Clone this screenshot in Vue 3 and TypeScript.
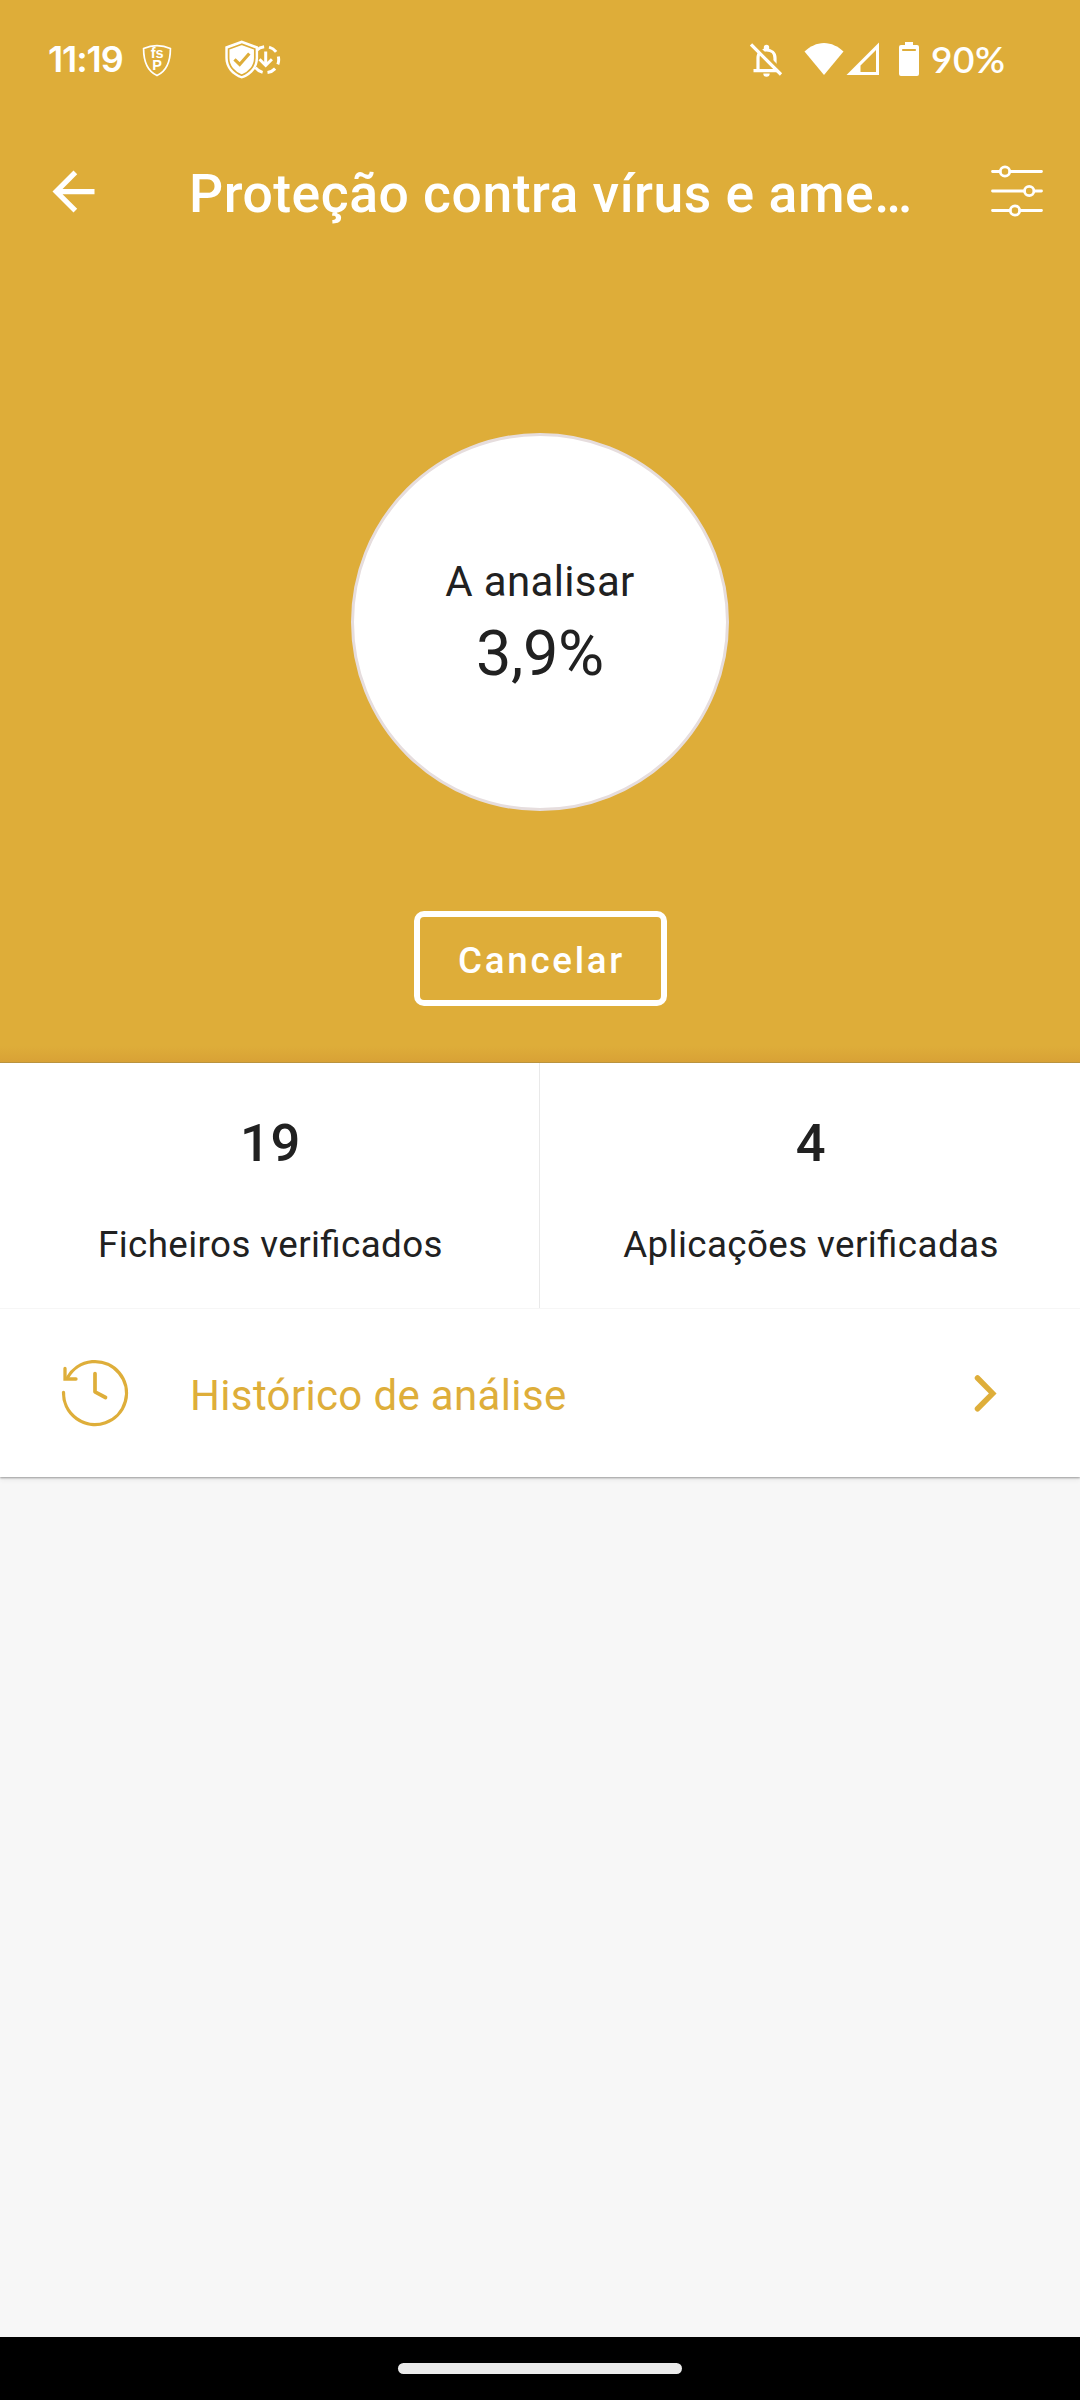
<script setup lang="ts">
interface Stat {
  value: string
  label: string
}

const title = 'Proteção contra vírus e ame…'
const progress = '3,9%'
const stats: Stat[] = [
  { value: '19', label: 'Ficheiros verificados' },
  { value: '4', label: 'Aplicações verificadas' },
]
</script>

<template>
  <div class="screen">
    <section class="hero">
      <div class="status">
        <span class="time">11:19</span>
        <svg class="fsp" width="32" height="36" viewBox="0 0 32 36">
          <path d="M16 2.600C11.600 2.600 6.500 3.800 2.600 5.600C2.600 17.500 5.800 28 16 32.600C26.200 28 29.400 17.500 29.400 5.600C25.500 3.800 20.400 2.600 16 2.600Z" fill="none" stroke="#fff" stroke-width="1.700" />
          <text x="16.200" y="15.400" text-anchor="middle" class="fsp-text">fs</text>
          <text x="16.200" y="27.200" text-anchor="middle" class="fsp-text">P</text>
        </svg>
        <svg class="guard" width="64" height="44" viewBox="0 0 64 44">
          <circle cx="45.700" cy="21.700" r="13" fill="none" stroke="#fff" stroke-width="3" stroke-dasharray="8.600 5.014" stroke-dashoffset="3.800" />
          <path d="M45.700 13.500V27M39.500 21.300L45.700 27.500L51.900 21.300" fill="none" stroke="#fff" stroke-width="3" />
          <path d="M21.700 2.500L5.300 8.500V20C5.300 29.500 12 37.500 21.700 40.500C31.400 37.500 38.100 29.500 38.100 20V8.500Z" fill="#fff" />
          <path d="M21.700 6.200L8.600 11V20C8.600 28 14 34.500 21.700 37.200C29.400 34.500 34.800 28 34.800 20V11Z" fill="none" stroke="#dead39" stroke-width="1.700" />
          <path d="M14.500 21.300L19.700 26.500L29.300 15.500" fill="none" stroke="#dead39" stroke-width="3.200" />
        </svg>
        <span class="spring"></span>
        <svg class="bell" width="34" height="36" viewBox="0 0 34 36">
          <g fill="none" stroke="#fff" stroke-width="3.200">
            <path d="M8 27.500V16C8 11 11.500 8 16.500 8C21.500 8 25 11 25 16V27.500M3.500 28.700H29" />
          </g>
          <path d="M13.800 8V5.500A2.700 2.700 0 0 1 19.200 5.500V8ZM13.300 31.500H19.700A3.200 3.200 0 0 1 13.300 31.500Z" fill="#fff" />
          <path d="M3.500 1L33 30.500" stroke="#dead39" stroke-width="3.500" />
          <path d="M1 2.500L31 32.500" stroke="#fff" stroke-width="3.200" />
        </svg>
        <svg class="wifi" width="40" height="34" viewBox="0 0 40 34">
          <path d="M20 33L.5 9.500C6 4.500 12.500 1 20 1S34 4.500 39.500 9.500Z" fill="#fff" />
        </svg>
        <svg class="signal" width="34" height="34" viewBox="0 0 34 34">
          <path d="M33 .5V33H.5ZM30 8L14.500 23.500V30H30Z" fill="#fff" fill-rule="evenodd" />
        </svg>
        <svg class="battery" width="20" height="34" viewBox="0 0 20 34">
          <path d="M6 0H14V3H18Q20 3 20 5V32Q20 34 18 34H2Q0 34 0 32V5Q0 3 2 3H6ZM3.200 7V9H16.800V7Z" fill="#fff" fill-rule="evenodd" />
        </svg>
        <span class="percent">90%</span>
      </div>

      <header class="bar">
        <svg width="63" height="63" viewBox="0 0 24 24">
          <path d="M20 11H7.830l5.590-5.590L12 4l-8 8 8 8 1.410-1.410L7.830 13H20v-2z" fill="#fff" />
        </svg>
        <h1 class="title">{{ title }}</h1>
        <svg class="sliders" width="54" height="54" viewBox="0 0 54 54" fill="none" stroke="#fff" stroke-width="2.800" stroke-linecap="round">
          <path d="M2.500 7.500H10M20 7.500H51.500M2.500 27H34.200M44.200 27H51.500M2.500 46.500H20M30 46.500H51.500" />
          <circle cx="15" cy="7.500" r="4.700" />
          <circle cx="39.200" cy="27" r="4.700" />
          <circle cx="25" cy="46.500" r="4.700" />
        </svg>
      </header>

      <div class="disc">
        <span class="state">A analisar</span>
        <span class="progress">{{ progress }}</span>
      </div>
      <button class="cancel" type="button">Cancelar</button>
    </section>

    <section class="card">
      <div class="stats">
        <div v-for="stat in stats" :key="stat.label" class="stat">
          <span class="value">{{ stat.value }}</span>
          <span class="label">{{ stat.label }}</span>
        </div>
      </div>
      <div class="history">
        <svg width="72" height="72" viewBox="0 0 72 72" fill="none" stroke="#deae3a" stroke-width="3.300" stroke-linecap="round" stroke-linejoin="round">
          <path d="M4.500 35.500A31.500 31.500 0 1 0 8.600 20.500" />
          <path d="M6 11.500V22H17" stroke-linejoin="miter" />
          <path d="M36 16.500V34.800L46.500 40.500" stroke-width="3.700" />
        </svg>
        <span class="history-text">Histórico de análise</span>
        <svg class="chevron" width="28" height="42" viewBox="0 0 28 42" fill="none" stroke="#deae3a" stroke-width="5.500" stroke-linecap="round" stroke-linejoin="miter">
          <path d="M5.500 6L20.700 21.400L5.500 36.800" />
        </svg>
      </div>
    </section>

    <div class="rest"></div>
    <nav class="gesture"><span class="pill"></span></nav>
  </div>
</template>

<style>
body {
  margin: 0;
}
</style>

<style scoped>
.screen {
  width: 1080px;
  height: 2400px;
  display: flex;
  flex-direction: column;
  overflow: hidden;
  background: #f7f7f7;
  color: #212121;
  font-family: Roboto, sans-serif;
}
svg {
  display: block;
  flex: none;
}
.hero {
  box-sizing: border-box;
  height: 1063px;
  display: flex;
  flex-direction: column;
  align-items: center;
  background: linear-gradient(to bottom, transparent 1046px, rgba(190, 110, 40, 0.18) 1062px, rgba(130, 110, 70, 0.4) 1062px) #dead39;
}
.status {
  box-sizing: border-box;
  width: 100%;
  height: 118px;
  padding: 0 75px 0 48px;
  display: flex;
  align-items: center;
  color: #fff;
  white-space: nowrap;
}
.time {
  width: 93px;
  font: 600 36px/44px Inter, sans-serif;
  letter-spacing: -1.100px;
}
.fsp {
  margin-top: 3px;
}
.fsp-text {
  font: 700 14.500px "Liberation Sans", sans-serif;
  fill: #fff;
}
.guard {
  margin: 2px 0 0 47px;
}
.spring {
  flex: 1;
}
.bell {
  margin: 1px 20px 0 0;
}
.wifi {
  margin-right: 2px;
}
.signal {
  margin-right: 19px;
}
.battery {
  margin-right: 12px;
}
.percent {
  width: 74px;
  font: 600 37px/44px Lato, sans-serif;
  letter-spacing: 0.500px;
}
.bar {
  box-sizing: border-box;
  width: 100%;
  height: 147px;
  padding: 0 36px 0 42px;
  display: flex;
  align-items: center;
  color: #fff;
}
.title {
  flex: 1;
  margin: 0 0 0 84px;
  padding-top: 4px;
  font-size: 53.500px;
  font-weight: 500;
  line-height: 64px;
  letter-spacing: 0.500px;
  white-space: nowrap;
}
.sliders {
  margin-bottom: 1px;
}
.disc {
  box-sizing: border-box;
  width: 378px;
  height: 378px;
  margin-top: 168px;
  padding-top: 3px;
  border: 3px solid #e6dddd;
  border-radius: 50%;
  background: #fff;
  display: flex;
  flex-direction: column;
  align-items: center;
  justify-content: center;
  gap: 10px;
}
.state {
  font-size: 42px;
  line-height: 50px;
  letter-spacing: 0.350px;
}
.progress {
  font-size: 63px;
  line-height: 74px;
  letter-spacing: -0.400px;
}
.cancel {
  box-sizing: border-box;
  width: 253px;
  height: 95px;
  margin-top: 100px;
  padding: 4px 0 0 3px;
  border: 6px solid #fff;
  border-radius: 10px;
  background: transparent;
  color: #fff;
  font: 500 36.750px/44px Roboto, sans-serif;
  letter-spacing: 2.700px;
}
.card {
  position: relative;
  background: #fff;
  box-shadow: 0 1px 2px rgba(0, 0, 0, 0.35), 0 3px 5px rgba(0, 0, 0, 0.06);
  clip-path: inset(0 0 -12px 0);
}
.stats {
  box-sizing: border-box;
  height: 246px;
  display: flex;
  border-bottom: 1px solid #f6f6f6;
}
.stat {
  box-sizing: border-box;
  width: 540px;
  padding: 49px 0 0 2px;
  display: flex;
  flex-direction: column;
  align-items: center;
  gap: 49px;
}
.stat:first-child {
  border-right: 1px solid #e9e9e9;
}
.value {
  font-size: 52.500px;
  font-weight: 500;
  line-height: 62px;
  letter-spacing: 0.660px;
}
.label {
  font-size: 36.750px;
  line-height: 44px;
  letter-spacing: 0.400px;
  font-feature-settings: "liga" 1;
}
.history {
  box-sizing: border-box;
  height: 168px;
  padding: 0 80px 0 59px;
  display: flex;
  align-items: center;
}
.history-text {
  flex: 1;
  padding: 5px 0 0 59px;
  color: #deae3a;
  font-size: 42px;
  line-height: 50px;
  letter-spacing: 0.350px;
}
.rest {
  flex: 1;
}
.gesture {
  height: 63px;
  display: flex;
  justify-content: center;
  align-items: center;
  background: #000;
}
.pill {
  width: 284px;
  height: 11px;
  border-radius: 6px;
  background: #ebebeb;
}
</style>
